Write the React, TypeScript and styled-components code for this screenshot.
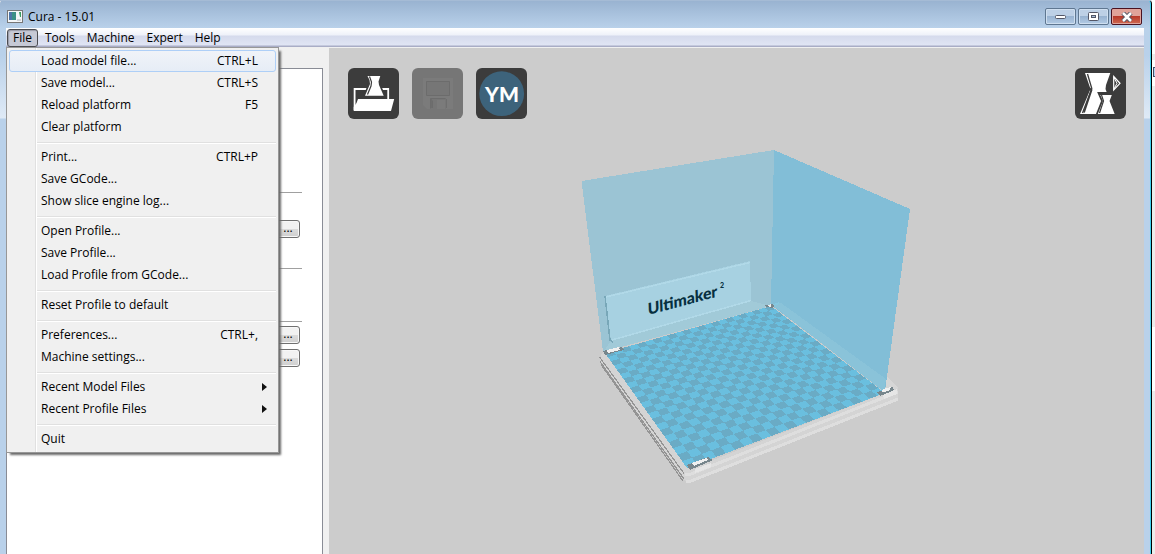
import React from "react";
import styled, { createGlobalStyle, css } from "styled-components";

const GlobalStyle = createGlobalStyle`
  * { box-sizing: border-box; }
  html, body, #root { height: 100%; }
  body {
    margin: 0;
    overflow: hidden;
    font: 12px/16px "Open Sans", "Noto Sans", sans-serif;
    color: #000;
    background: #ececec;
  }
  button { font: inherit; color: inherit; }
`;

const Desktop = styled.div`
  display: flex;
  height: 100%;
  min-height: 460px;
`;

const Behind = styled.div`
  width: 3px;
  flex: none;
  display: flex;
  flex-direction: column;
  background: linear-gradient(#fff 0 54px, #ececec 54px 60px, #fff 60px 86px, #ececec 86px 327px, #fff 327px 391px, #ececec 391px);
`;

const BehindMark = styled.div`
  margin: 67px 0 0 1px;
  height: 10px;
  border: 1px solid #44506c;
  border-right: 0;
  background: #b9d4ef;
`;

const AppWindow = styled.div`
  flex: 1;
  min-width: 0;
  display: flex;
  flex-direction: column;
  border-right: 1px solid #000;
  box-shadow: inset -1px 0 #3fd0ee;
  border-radius: 4px 4px 0 0;
  background:
    linear-gradient(#98b2d0 0, #b9d1ea 28px, #b9d1ea 55px, #dfeaf6 118px, #b9d1ea 119px);
`;

const TitleBar = styled.header`
  height: 28px;
  flex: none;
  display: flex;
  align-items: flex-start;
  gap: 5px;
  padding: 9px 7px 0 7px;
  border-top: 1px solid #a5bbd5;
`;

const Title = styled.h1`
  flex: 1;
  margin: 0;
  font-size: 12px;
  line-height: 14px;
  font-weight: 400;
`;

const WindowButtons = styled.div`
  display: flex;
  gap: 2px;
  margin: -2px 2px 0 0;
`;

const WindowButton = styled.button<{ $close?: boolean }>`
  width: 31px;
  height: 17px;
  padding: 0;
  display: grid;
  place-items: center;
  border: 1px solid ${(p) => (p.$close ? "#4a1220" : "#5f7791")};
  border-radius: 2px;
  box-shadow: inset 0 0 0 1px ${(p) => (p.$close ? "#e0a49c" : "#cfdff0")};
  background: ${(p) =>
    p.$close
      ? "linear-gradient(#e0a299 0 45%, #b8392a 50%, #cf6a52)"
      : "linear-gradient(#bdd0e6 0 45%, #98b3d1 50%, #b3cbe5)"};
`;

const Client = styled.div`
  flex: 1;
  min-height: 0;
  margin: 0 7px 0 6px;
  display: flex;
  flex-direction: column;
`;

const MenuBar = styled.nav`
  position: relative;
  height: 20px;
  flex: none;
  display: flex;
  align-items: flex-start;
  padding: 1px 0 0 1px;
  background: linear-gradient(#fff 0, #eef1f9 7px, #d5daec 8px, #e0e5f4 17px, #a9adc6 18px, #a9adc6 19px, #f0f0f0 19px);
`;

const MenuTitle = styled.button<{ $open?: boolean }>`
  height: 18px;
  padding: 0 5px;
  border: 1px solid transparent;
  border-radius: 3px;
  background: none;
  line-height: 16px;
  ${(p) =>
    p.$open &&
    css`
      margin-right: 1px;
      border-color: #4b4c50;
      background: #c6c9d5;
      box-shadow: inset 1px 1px 1px #9a9ca8;
    `}
`;

const Menu = styled.div`
  position: absolute;
  z-index: 2;
  top: 19px;
  left: 0;
  width: 273px;
  padding: 2px;
  border: 1px solid #979797;
  background: linear-gradient(90deg, #f0f0f0 28px, #e0e0e0 28px 29px, #fff 29px 30px, #f0f0f0 30px);
  box-shadow: 3px 3px 2px -1px #6a6a6a;
`;

const MenuItem = styled.button<{ $active?: boolean }>`
  display: flex;
  justify-content: space-between;
  align-items: center;
  width: 100%;
  height: 22px;
  padding: 0 17px 0 31px;
  border: 1px solid transparent;
  border-radius: 3px;
  background: none;
  text-align: left;
  ${(p) =>
    p.$active &&
    css`
      border-color: #aecff7;
      background: linear-gradient(#f0f3f8, #e6edf6);
    `}
`;

const Arrow = styled.svg`
  width: 5px;
  height: 8px;
  margin-right: -9px;
`;

const Separator = styled.hr`
  margin: 4px 0 2px 28px;
  height: 2px;
  border: 0;
  border-top: 1px solid #e0e0e0;
  background: #fff;
`;

const Body = styled.div`
  flex: 1;
  min-height: 0;
  display: flex;
`;

const Sidebar = styled.aside`
  width: 323px;
  flex: none;
  padding: 20px 6px 0 0;
  display: flex;
  background: #f0f0f0;
`;

const SettingsPage = styled.div`
  flex: 1;
  display: flex;
  flex-direction: column;
  padding: 123px 20px 0;
  border: 1px solid #898c95;
  border-bottom: 0;
  background: #fff;
`;

const Group = styled.section<{ $height: number }>`
  height: ${(p) => p.$height}px;
  display: flex;
  flex-direction: column;
  align-items: flex-end;
  border-top: 1px solid #a0a0a0;
`;

const MoreButton = styled.button<{ $gap: number }>`
  width: 24px;
  height: 18px;
  flex: none;
  display: flex;
  justify-content: center;
  margin: ${(p) => p.$gap}px 2px 0 0;
  padding: 0;
  border: 1px solid #707070;
  border-radius: 3px;
  background: linear-gradient(#f2f2f2 0 50%, #dcdcdc 50%, #cfcfcf);
  box-shadow: inset 0 0 0 1px #f8f8f8;
  line-height: 13px;
`;

const Viewport = styled.main`
  flex: 1;
  min-width: 0;
  position: relative;
  overflow: hidden;
  background: #ccc;
`;

const Toolbar = styled.div`
  position: relative;
  display: flex;
  gap: 13px;
  padding: 20px 18px 0 19px;
`;

const ToolButton = styled.button<{ $right?: boolean }>`
  width: 51px;
  height: 51px;
  padding: 0;
  border: 0;
  background: none;
  margin-left: ${(p) => (p.$right ? "auto" : "0")};
  svg { display: block; }
`;

const Scene = styled.svg`
  position: absolute;
  top: 0;
  left: 50%;
  width: 816px;
  height: 506px;
  margin-left: -408px;
`;

type Entry = { label: string; keys?: string; sub?: boolean } | null;

const entries: Entry[] = [
  { label: "Load model file...", keys: "CTRL+L" },
  { label: "Save model...", keys: "CTRL+S" },
  { label: "Reload platform", keys: "F5" },
  { label: "Clear platform" },
  null,
  { label: "Print...", keys: "CTRL+P" },
  { label: "Save GCode..." },
  { label: "Show slice engine log..." },
  null,
  { label: "Open Profile..." },
  { label: "Save Profile..." },
  { label: "Load Profile from GCode..." },
  null,
  { label: "Reset Profile to default" },
  null,
  { label: "Preferences...", keys: "CTRL+," },
  { label: "Machine settings..." },
  null,
  { label: "Recent Model Files", sub: true },
  { label: "Recent Profile Files", sub: true },
  null,
  { label: "Quit" },
];

type Pt = [number, number];

// Perspective map from the unit square to the bed: back-left, back-right, front-right, front-left.
function projector([a, b, c, d]: Pt[]) {
  const sx = a[0] - b[0] + c[0] - d[0];
  const sy = a[1] - b[1] + c[1] - d[1];
  const dx1 = b[0] - c[0], dx2 = d[0] - c[0];
  const dy1 = b[1] - c[1], dy2 = d[1] - c[1];
  const den = dx1 * dy2 - dx2 * dy1;
  const g = (sx * dy2 - dx2 * sy) / den;
  const h = (dx1 * sy - sx * dy1) / den;
  return (u: number, v: number) => {
    const w = g * u + h * v + 1;
    const x = ((b[0] - a[0] + g * b[0]) * u + (d[0] - a[0] + h * d[0]) * v + a[0]) / w;
    const y = ((b[1] - a[1] + g * b[1]) * u + (d[1] - a[1] + h * d[1]) * v + a[1]) / w;
    return `${x.toFixed(2)} ${y.toFixed(2)}`;
  };
}

const bed: Pt[] = [[605, 353], [771, 306], [885, 393], [687, 468]];

function checkerPath(cols: number, rows: number) {
  const at = projector(bed);
  let path = "";
  for (let i = 0; i < cols; i++) {
    for (let j = 0; j < rows; j++) {
      if ((i + j) % 2) continue;
      const u0 = i / cols, u1 = (i + 1) / cols, v0 = j / rows, v1 = (j + 1) / rows;
      path += `M${at(u0, v0)}L${at(u1, v0)}L${at(u1, v1)}L${at(u0, v1)}Z`;
    }
  }
  return path;
}

const Printer = () => (
  <Scene viewBox="329 48 816 506" aria-label="Print platform" shapeRendering="crispEdges">
    <path fill="#d4d4d4" d="M601 355L605 350L690 469L885 393L893 383L898 389V400L690 483L684 480L600 362Z" />
    <path fill="none" stroke="#949494" strokeWidth="1.2" d="M599.500 357L684 473.500M600 361.500L684 479M601 364.500L683 481" />
    <path fill="none" stroke="#dedede" strokeWidth="3" d="M685 474L691 474L898 392M686 481L691 481L898 399" />
    <path fill="#d6d6d6" d="M885 375L898 388L892 392L882 384Z" />
    <path fill="#9bc4d4" d="M581.500 181L774 150L771 305L603 352Z" />
    <path fill="#82bed7" d="M774 150L910 209L885 391L771 305Z" />
    <path fill="#8ac3d9" d="M771 304L781 303L886 379L884 392Z" />
    <path fill="#a1cad8" d="M611 341L751 301L771 306L603 352Z" />
    <path fill="#6abfdf" d="M605 353L771 306L885 393L687 468Z" />
    <path fill="#6aabc5" d={checkerPath(23, 22)} />
    <path fill="#a7d1e1" d="M605 296L750 261L751 301L611 341Z" />
    <path fill="none" stroke="#b1d9e8" strokeWidth="1.500" d="M606 297L750 262.500M612 340L751 300.500" />
    <path fill="none" stroke="#78a7b8" strokeWidth="1.500" d="M605 296L610 340L613 342" />
    <g fill="#062f40" fontFamily="Lato, sans-serif" fontWeight="900">
      <text transform="matrix(.98 -.26 .04 1 648 315)" fontSize="16">Ultimaker</text>
      <text x="720" y="288" fontSize="7">2</text>
    </g>
    <path fill="#77868c" d="M603 351L622 347L624 350L605 355ZM687 465L708 457L713 460L690 470ZM877 392L893 387L894 391L880 396ZM765 305L775 304L773 308L766 307Z" />
    <path fill="#86c8e0" d="M773 304L779 302V304L774 306Z" />
    <path fill="#f0f0f0" d="M607 350L619 347L620 350L608 353ZM692 463L706 458L708 460L694 466ZM767 306L771 304L771 307ZM883 389L891 387L889 391L882 392Z" />
    <path fill="#e6e6e6" d="M695 469L711 463V467L695 473ZM883 395L897 389V394L884 399Z" />
  </Scene>
);

const Tile = ({ fill = "#3c3c3c" }: { fill?: string }) => (
  <rect width="51" height="51" rx="6" fill={fill} />
);

const LoadIcon = () => (
  <svg width="51" height="51" viewBox="0 0 51 51">
    <Tile />
    <path fill="none" stroke="#fff" strokeWidth="1.800" d="M6.600 42V21H40.200V31" />
    <path fill="#3c3c3c" d="M18 7H34L32 15L38 29H15L20 16Z" />
    <path fill="#fff" d="M19.500 8H32.300L30.500 13.500L31 17L35.700 27.700H17L22 16L21.500 12Z" />
    <path fill="none" stroke="#3c3c3c" strokeWidth="1.200" d="M21.500 8.500L23.500 14L23 18L19.500 26.500" />
    <path fill="#fff" d="M10 31H46.200L43 43H5.700V39L8.500 35Z" />
  </svg>
);

const SaveIcon = () => (
  <svg width="51" height="51" viewBox="0 0 51 51">
    <Tile fill="#767676" />
    <path fill="#7b7b7b" fillRule="evenodd" d="M11 10H41V41H15L11 37ZM14 13V27H38V13ZM18 30V41H34V30Z" />
    <path fill="none" stroke="#6c6c6c" d="M14.500 27.500V13.500H37.500V27.500ZM18.500 40.500V30.500H33.500M20.500 40V32.500" />
    <path fill="#7b7b7b" d="M25 32H33V41H25Z" />
    <path fill="none" stroke="#6e6e6e" d="M19.500 31V40M34.500 31V40" />
  </svg>
);

const YouMagineIcon = () => (
  <svg width="51" height="51" viewBox="0 0 51 51">
    <Tile />
    <circle cx="25.700" cy="25.700" r="22.400" fill="#3d637b" />
    <text x="26" y="33.500" textAnchor="middle" fill="#fff" fontFamily="Lato, sans-serif" fontWeight="900" fontSize="21">YM</text>
  </svg>
);

const ViewModeIcon = () => (
  <svg width="51" height="51" viewBox="0 0 51 51">
    <Tile />
    <path fill="#fff" d="M10 5H35.300L31 17L30.500 21L32 25L24 46H5L15.500 21Z" />
    <path fill="none" stroke="#3c3c3c" strokeWidth="1.300" d="M12.500 6L16.800 20.500L7.500 45" />
    <path fill="none" stroke="#3c3c3c" strokeWidth="1.800" d="M14 20L16.500 22L9 44.500" />
    <path fill="#fff" stroke="#3c3c3c" strokeWidth="1.800" d="M23.500 25H38.500L35.500 33L41 47H21.500L27 33Z" />
    <path fill="none" stroke="#3c3c3c" strokeWidth="1.200" d="M26.500 27L28.500 33L24.500 45" />
    <path fill="none" stroke="#3c3c3c" d="M24 26.500H38" />
    <path fill="none" stroke="#fff" strokeWidth="1.200" d="M38.700 8.500L45 15.300L38.700 22Z" />
    <path fill="none" stroke="#fff" d="M38.700 9L42 15.300L38.700 21.500" />
  </svg>
);

export default function App() {
  return (
    <Desktop>
      <GlobalStyle />
      <AppWindow>
        <TitleBar>
          <svg width="16" height="13" viewBox="0 0 16 13" aria-hidden="true">
            <rect x=".5" y=".5" width="15" height="12" fill="#f4f6f8" stroke="#777" />
            <path fill="#3c8f86" d="M2 2H9V10H2Z" />
            <path fill="#4d75a8" d="M2 2H5V10H2Z" />
            <path fill="#3a9b62" d="M12 2H14V7H13Z" />
            <path fill="#cfd4d8" d="M10 9H14V11H10Z" />
          </svg>
          <Title>Cura - 15.01</Title>
          <WindowButtons>
            <WindowButton aria-label="Minimize">
              <svg width="12" height="6"><rect x=".5" y="1.500" width="10" height="3" rx="1" fill="#fff" stroke="#535666" /></svg>
            </WindowButton>
            <WindowButton aria-label="Maximize">
              <svg width="11" height="9"><rect x=".5" y=".5" width="10" height="8" rx="1" fill="#fff" stroke="#535666" /><rect x="3.500" y="3.500" width="4" height="2" fill="#a7bfda" stroke="#535666" /></svg>
            </WindowButton>
            <WindowButton $close aria-label="Close">
              <svg width="12" height="10" viewBox="0 0 12 10"><path stroke="#535666" strokeWidth="4.500" d="M2 1L10 9M10 1L2 9" /><path stroke="#fff" strokeWidth="2.500" d="M2 1L10 9M10 1L2 9" /></svg>
            </WindowButton>
          </WindowButtons>
        </TitleBar>
        <Client>
          <MenuBar>
            <MenuTitle $open>File</MenuTitle>
            {["Tools", "Machine", "Expert", "Help"].map((t) => (
              <MenuTitle key={t}>{t}</MenuTitle>
            ))}
            <Menu role="menu">
              {entries.map((e, i) =>
                e ? (
                  <MenuItem key={i} role="menuitem" $active={i === 0}>
                    <span>{e.label}</span>
                    {e.keys && <span>{e.keys}</span>}
                    {e.sub && (
                      <Arrow viewBox="0 0 5 8"><path d="M0 0L5 4L0 8Z" fill="#111" /></Arrow>
                    )}
                  </MenuItem>
                ) : (
                  <Separator key={i} />
                )
              )}
            </Menu>
          </MenuBar>
          <Body>
            <Sidebar>
              <SettingsPage>
                <Group $height={76}><MoreButton $gap={27}>...</MoreButton></Group>
                <Group $height={53} />
                <Group $height={60}>
                  <MoreButton $gap={4}>...</MoreButton>
                  <MoreButton $gap={5}>...</MoreButton>
                </Group>
              </SettingsPage>
            </Sidebar>
            <Viewport>
              <Printer />
              <Toolbar>
                <ToolButton aria-label="Load"><LoadIcon /></ToolButton>
                <ToolButton aria-label="Save" disabled><SaveIcon /></ToolButton>
                <ToolButton aria-label="YouMagine"><YouMagineIcon /></ToolButton>
                <ToolButton aria-label="View mode" $right><ViewModeIcon /></ToolButton>
              </Toolbar>
            </Viewport>
          </Body>
        </Client>
      </AppWindow>
      <Behind><BehindMark /></Behind>
    </Desktop>
  );
}
